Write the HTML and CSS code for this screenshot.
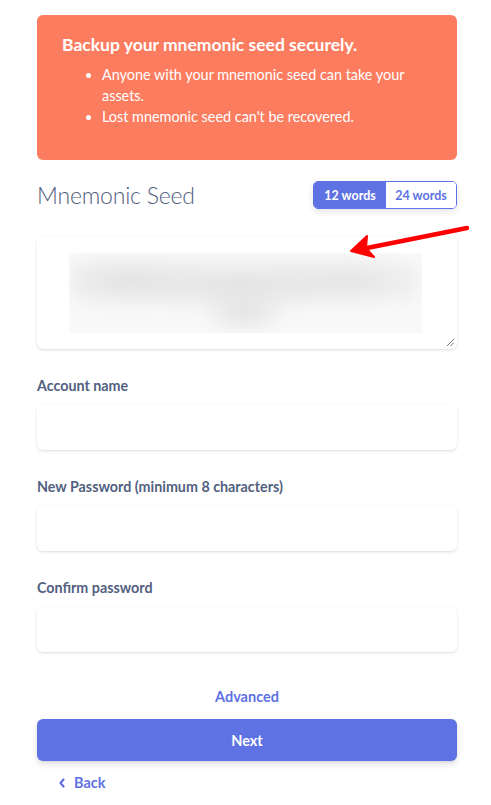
FILE: index.html
```html
<!DOCTYPE html>
<html>
<head>
<meta charset="utf-8">
<link rel="stylesheet" href="styles.css">
</head>
<body>
<div class="page">
  <div class="alert">
    <div class="alert-title">Backup your mnemonic seed securely.</div>
    <ul class="alert-list">
      <li>Anyone with your mnemonic seed can take your assets.</li>
      <li>Lost mnemonic seed can't be recovered.</li>
    </ul>
  </div>

  <div class="seed-head">
    <h1 class="seed-title">Mnemonic Seed</h1>
    <div class="toggle">
      <span class="toggle-btn active">12 words</span>
      <span class="toggle-btn">24 words</span>
    </div>
  </div>

  <div class="seed-box">
    <div class="blur-wrap"><div class="blur"></div></div>
    <svg class="resize" width="8" height="8" viewBox="0 0 8 8"><path d="M1 8 L8 1 M4.5 8 L8 4.5" stroke="#777" stroke-width="1"/></svg>
  </div>

  <label class="label first">Account name</label>
  <div class="input"></div>

  <label class="label">New Password (minimum 8 characters)</label>
  <div class="input"></div>

  <label class="label">Confirm password</label>
  <div class="input"></div>

  <div class="advanced">Advanced</div>
  <button class="next">Next</button>
  <div class="back">
    <svg width="8" height="10" viewBox="0 0 8 10"><path d="M5.5 1.5 L2.5 5 L5.5 8.5" stroke="#5e72e4" stroke-width="2.2" fill="none" stroke-linecap="round" stroke-linejoin="round"/></svg>
    <span>Back</span>
  </div>
</div>
<svg class="arrow" width="491" height="805" viewBox="0 0 491 805">
  <path d="M467 228 L362 249" stroke="#ff0000" stroke-width="4.5" stroke-linecap="round"/>
  <path d="M351 251 L367 236 L366 248 L374 257 Z" fill="#ff0000" stroke="#ff0000" stroke-width="2" stroke-linejoin="round"/>
</svg>
</body>
</html>
```

FILE: styles.css
```css
* { box-sizing: border-box; }
html, body { margin: 0; padding: 0; background: #fff; }
body { font-family: Lato, "Open Sans", sans-serif; color: #525f7f; position: relative; }
.page { padding: 15px 34px 0 37px; display: flex; flex-direction: column; }

.alert {
  background: #fc7c5f;
  border-radius: 6px;
  color: #fff;
  padding: 20px 50px 20px 25px;
  height: 145px;
}
.alert-title { font-weight: 700; font-size: 17.5px; line-height: 20px; }
.alert-list { margin: 9px 0 0 0; padding-left: 40px; font-size: 14.4px; line-height: 21px; }

.seed-head { display: flex; justify-content: space-between; align-items: center; margin-top: 21px; height: 28px; }
.seed-title { margin: 0; font-size: 23px; font-weight: 300; color: #4f5d7d; letter-spacing: -0.2px; }
.toggle {
  display: flex;
  border: 1px solid #5e72e4;
  border-radius: 5px;
  overflow: hidden;
  height: 28px;
  box-shadow: 0 3px 6px rgba(50,50,93,0.12);
}
.toggle-btn {
  display: flex; align-items: center; justify-content: center;
  font-size: 12.5px; font-weight: 700; color: #5e72e4;
  width: 70px; background: #fff; height: 100%;
}
.toggle-btn.active { background: #5e72e4; color: #fff; width: 72px; }

.seed-box {
  margin-top: 28px;
  height: 112px;
  background: #fff;
  border-radius: 6px;
  box-shadow: 0 1px 3px rgba(50,50,93,0.15), 0 1px 0 rgba(0,0,0,0.02);
  position: relative;
  padding: 16px 35px 16px 32px;
}
.blur-wrap { width: 353px; height: 80px; background: #fafafa; overflow: hidden; }
.blur {
  width: 100%; height: 100%;
  background:
    radial-gradient(ellipse 100px 32px at 60px 28px, #e2e2e2, transparent),
    radial-gradient(ellipse 120px 32px at 170px 32px, #e2e2e2, transparent),
    radial-gradient(ellipse 110px 30px at 280px 28px, #e4e4e4, transparent),
    radial-gradient(ellipse 45px 26px at 175px 60px, #e4e4e4, transparent),
    #f8f8f8;
  filter: blur(6px);
}
.resize { position: absolute; right: 3px; bottom: 3px; }

.label { font-size: 14.3px; font-weight: 700; color: #525f7f; margin-top: 27px; line-height: 20px; }
.label.first { margin-top: 27px; }
.input {
  margin-top: 9px;
  height: 45px;
  background: #fff;
  border-radius: 6px;
  box-shadow: 0 1px 3px rgba(50,50,93,0.15), 0 1px 0 rgba(0,0,0,0.02);
}

.advanced { text-align: center; color: #5e72e4; font-size: 14.5px; font-weight: 700; margin-top: 35px; line-height: 20px; }
.next {
  margin-top: 12px;
  height: 42px;
  border: none;
  border-radius: 6px;
  background: #5e72e4;
  color: #fff;
  font-family: inherit;
  font-size: 14.5px;
  font-weight: 700;
  box-shadow: 0 4px 6px rgba(50,50,93,0.11), 0 1px 3px rgba(0,0,0,0.08);
}
.back { display: flex; align-items: center; gap: 8px; margin-top: 12px; margin-left: 21px; color: #5e72e4; font-size: 14.5px; font-weight: 700; line-height: 20px; }
.arrow { position: absolute; left: 0; top: 0; pointer-events: none; }
```
